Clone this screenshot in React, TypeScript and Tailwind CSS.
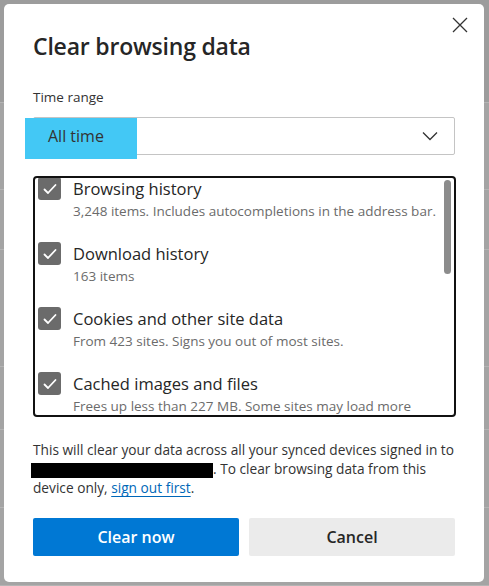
import React from "react";

const items = [
  { t: "Browsing history", s: "3,248 items. Includes autocompletions in the address bar." },
  { t: "Download history", s: "163 items" },
  { t: "Cookies and other site data", s: "From 423 sites. Signs you out of most sites." },
  { t: "Cached images and files", s: "Frees up less than 227 MB. Some sites may load more" },
];

function Check() {
  return (
    <div className="w-[23px] h-[23px] rounded-[3px] bg-[#6b6b6b] flex items-center justify-center shrink-0">
      <svg width="16" height="16" viewBox="0 0 16 16" fill="none">
        <path d="M2.5 8.5 L6 12 L13.5 4" stroke="white" strokeWidth="1.8" strokeLinecap="round" strokeLinejoin="round" />
      </svg>
    </div>
  );
}

const bgRows = [103, 87, 60, 117, 63, 78, 78];

export default function App() {
  return (
    <div
      className="relative w-[489px] h-[586px] bg-[#a4a4a4] overflow-hidden"
      style={{ fontFamily: '"Open Sans", "Noto Sans", sans-serif' }}
    >
      {/* background page behind the modal */}
      <div className="flex flex-col">
        {bgRows.map((h, i) => (
          <div
            key={i}
            className={i === 0 ? "bg-[#9c9c9c] border-b border-[#b4b4b4]" : "border-b border-[#b4b4b4]"}
            style={{ height: h }}
          />
        ))}
      </div>

      {/* modal */}
      <div className="absolute inset-[4px] bottom-[4px] right-[5px] bg-white rounded-[5px] px-[29px] pt-[26px] flex flex-col">
        <button className="absolute right-[14px] top-[11px] w-[20px] h-[20px] flex items-center justify-center">
          <svg width="16" height="16" viewBox="0 0 16 16">
            <path d="M1 1 L15 15 M15 1 L1 15" stroke="#333" strokeWidth="1.3" />
          </svg>
        </button>
        <h1 className="text-[23px] font-semibold text-[#262626] leading-[32px] tracking-[-0.2px]">Clear browsing data</h1>
        <div className="mt-[25px] text-[13.5px] text-[#333] leading-[20px]">Time range</div>
        <div className="relative mt-[10px] h-[38px] w-[422px] border border-[#c4c4c4] rounded-[2px] flex items-center pl-[14px] pr-[16px] justify-between">
          <div className="absolute left-[-9px] top-0 w-[112px] h-[41px] bg-[#43c8f5]" />
          <span className="relative text-[16px] text-[#333]">All time</span>
          <svg width="16" height="10" viewBox="0 0 16 10">
            <path d="M1 1.5 L8 8.5 L15 1.5" stroke="#333" strokeWidth="1.3" fill="none" />
          </svg>
        </div>
        <div className="relative mt-[21px] w-[423px] h-[241px] border-2 border-[#111] rounded-[4px] overflow-hidden">
          <div className="absolute right-[3px] top-[2px] w-[7px] h-[94px] rounded-full bg-[#8c8c8c]" />
          <div className="flex flex-col -mt-[1px]">
            {items.map((it) => (
              <div key={it.t} className="flex gap-[12px] pl-[3px] h-[65px]">
                <Check />
                <div className="flex flex-col">
                  <div className="text-[16.5px] text-[#262626] leading-[26px] -mt-[1px]">{it.t}</div>
                  <div className="text-[13.5px] text-[#6b6b6b] leading-[18px] whitespace-nowrap">{it.s}</div>
                </div>
              </div>
            ))}
          </div>
        </div>
        <p className="mt-[23px] text-[13.7px] text-[#333] leading-[19px] w-[428px]">
          This will clear your data across all your synced devices signed in to{" "}
          <span className="inline-block align-middle w-[182px] h-[15px] bg-black -ml-[2px]" />. To clear browsing data from this
          device only, <span className="text-[#0067b8] underline underline-offset-[3px]">sign out first</span>.
        </p>
        <div className="mt-[21px] flex gap-[10px] w-[422px]">
          <button className="flex-1 h-[38px] bg-[#0078d4] text-white text-[16px] font-semibold rounded-[2px]">Clear now</button>
          <button className="flex-1 h-[38px] bg-[#ebebeb] text-[#262626] text-[16px] font-semibold rounded-[2px]">Cancel</button>
        </div>
      </div>
    </div>
  );
}
